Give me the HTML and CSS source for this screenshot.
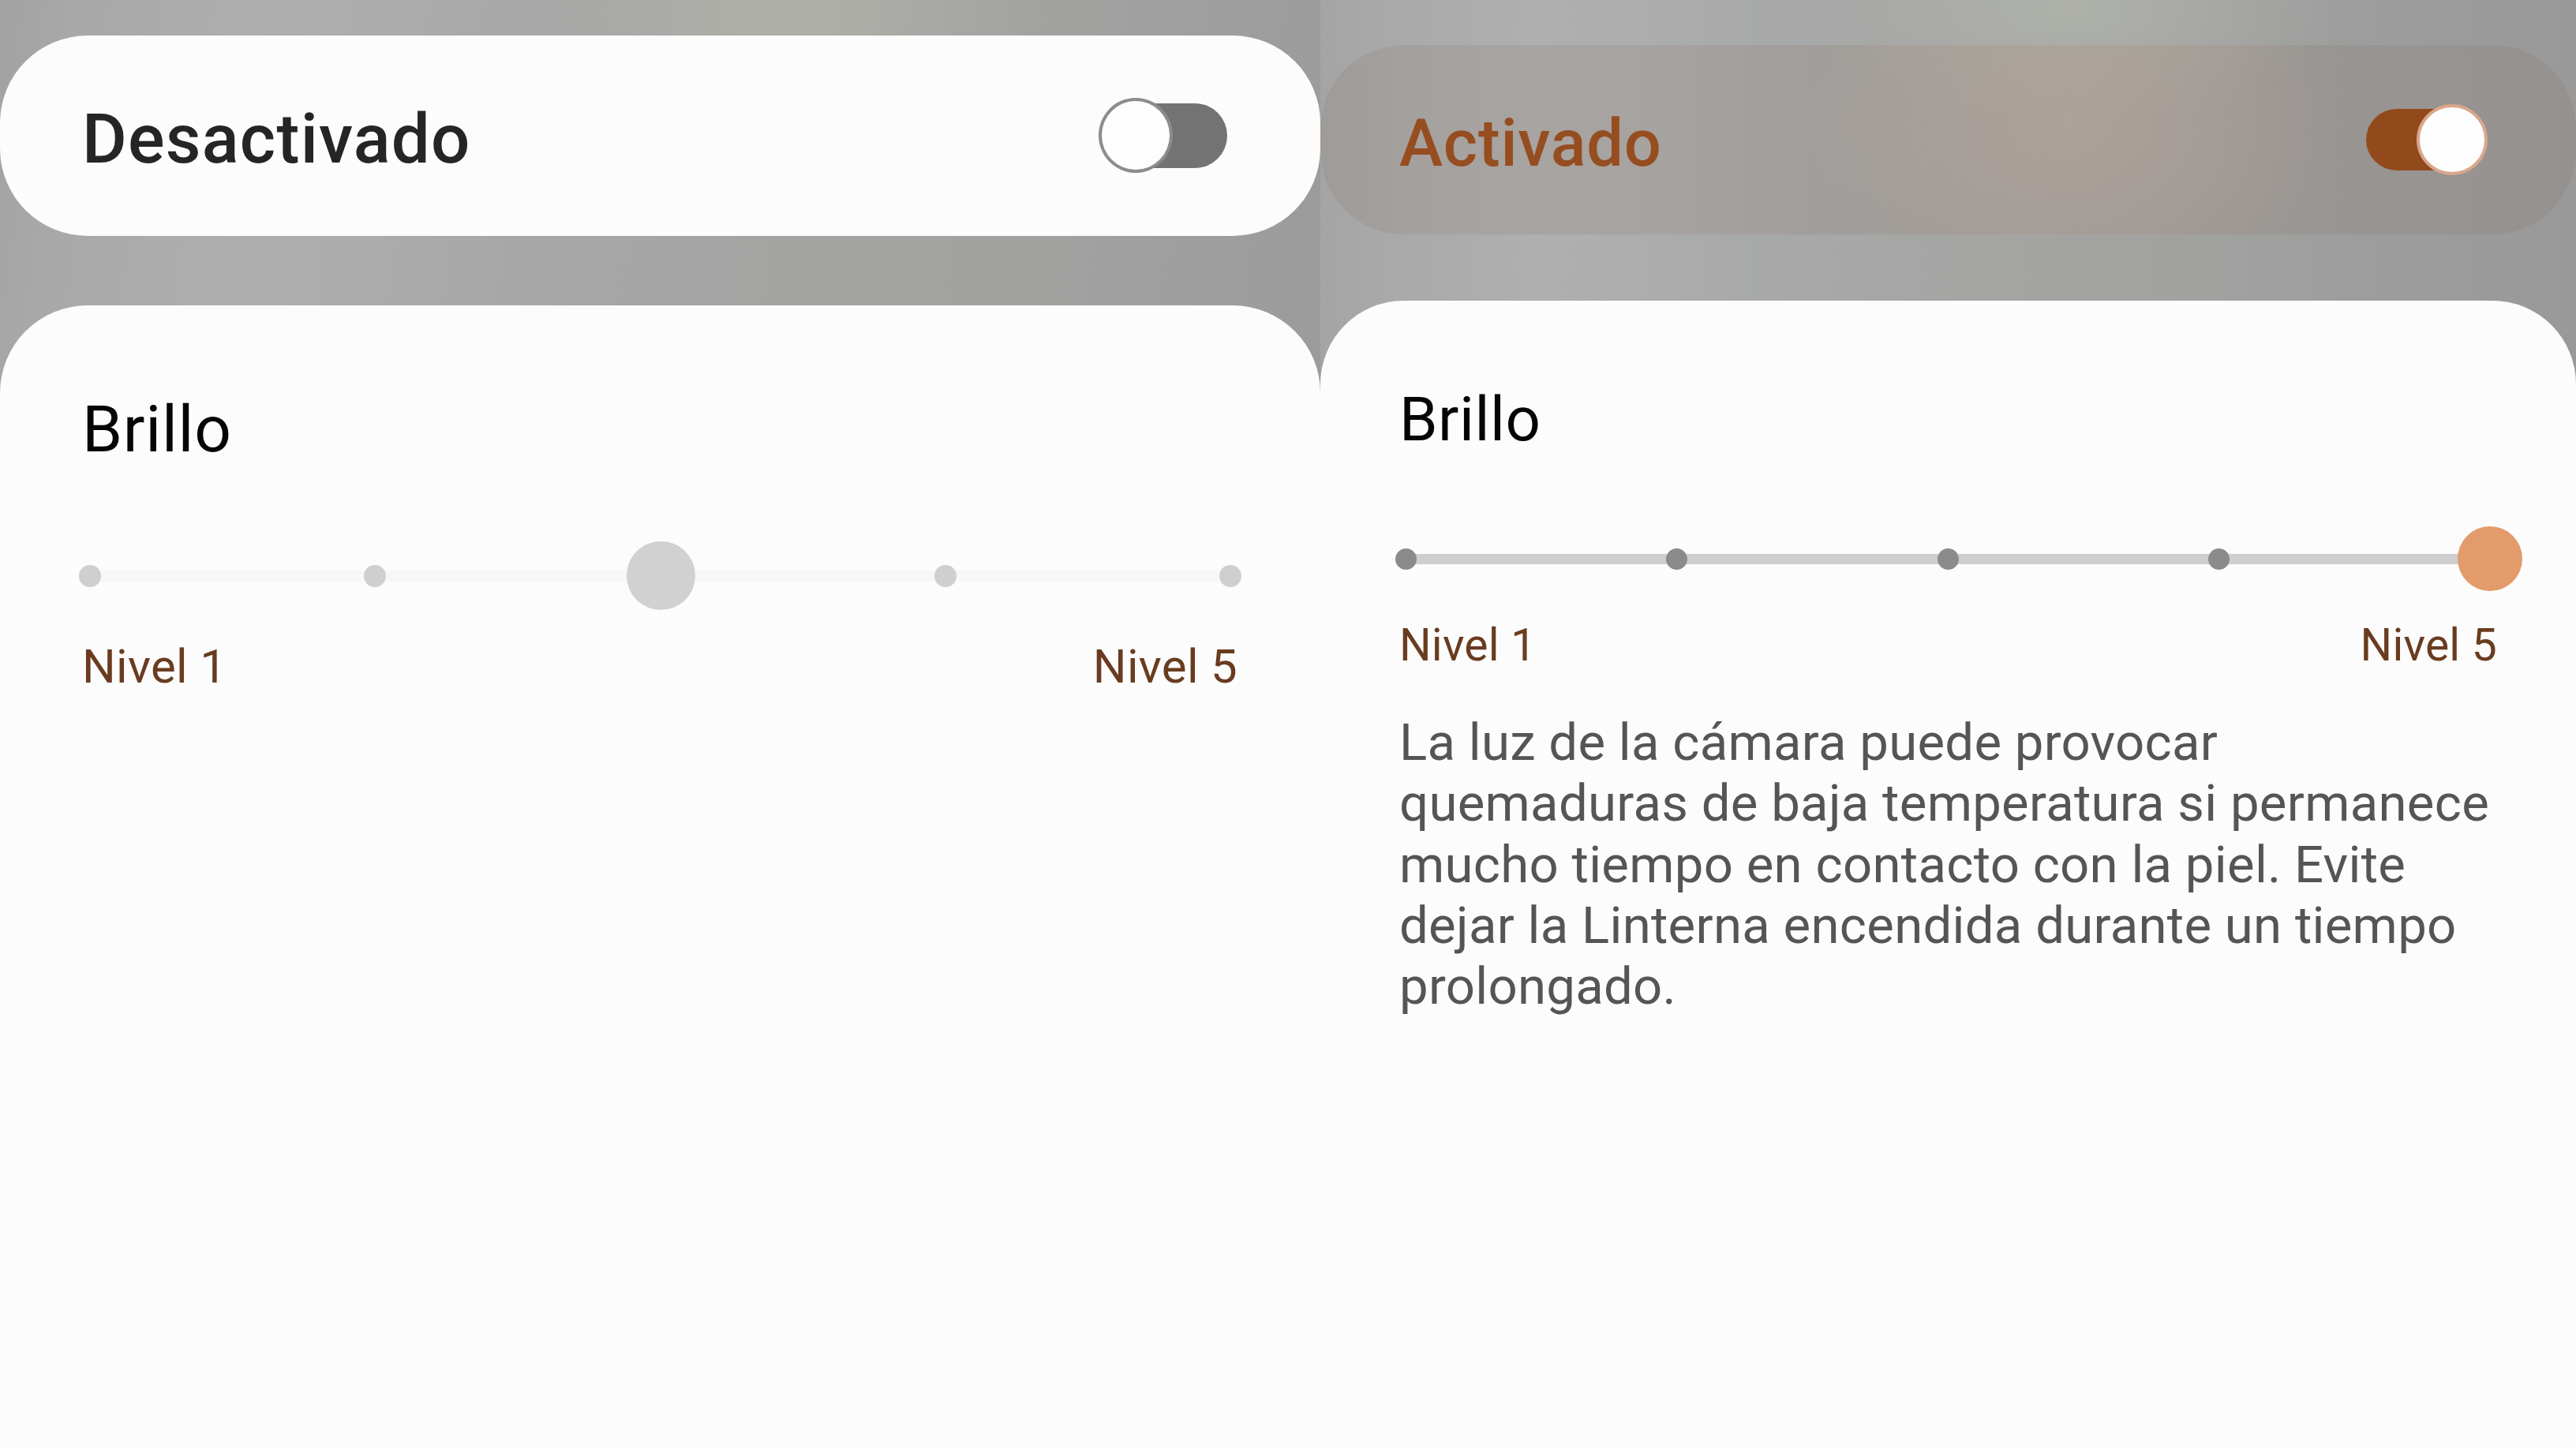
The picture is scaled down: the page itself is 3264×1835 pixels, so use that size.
FILE: index.html
```html
<!DOCTYPE html>
<html lang="es">
<head>
<meta charset="utf-8">
<title>Linterna</title>
<link rel="stylesheet" href="styles.css">
</head>
<body>
<main class="screen">
  <section class="pane pane-off">
    <header class="card">
      <h1 class="state">Desactivado</h1>
      <div class="switch" role="switch" aria-checked="false"><span class="knob"></span></div>
    </header>
    <div class="panel">
      <h2 class="heading">Brillo</h2>
      <div class="slider">
        <span class="dot"></span><span class="dot"></span><span class="thumb"></span><span class="dot"></span><span class="dot"></span>
      </div>
      <div class="labels"><span>Nivel 1</span><span>Nivel 5</span></div>
    </div>
  </section>
  <section class="pane pane-on">
    <header class="card">
      <h1 class="state">Activado</h1>
      <div class="switch" role="switch" aria-checked="true"><span class="knob"></span></div>
    </header>
    <div class="panel">
      <h2 class="heading">Brillo</h2>
      <div class="slider">
        <span class="dot"></span><span class="dot"></span><span class="dot"></span><span class="dot"></span><span class="thumb"></span>
      </div>
      <div class="labels"><span>Nivel 1</span><span>Nivel 5</span></div>
      <p class="warning">La luz de la cámara puede provocar<br>quemaduras de baja temperatura si permanece<br>mucho tiempo en contacto con la piel. Evite<br>dejar la Linterna encendida durante un tiempo<br>prolongado.</p>
    </div>
  </section>
</main>
</body>
</html>
```
FILE: styles.css
```css
* { box-sizing: border-box; margin: 0; }

body {
  width: 3264px;
  height: 1835px;
  overflow: hidden;
  background: #fcfcfc;
  font-family: Roboto, "Liberation Sans", sans-serif;
}

.screen { display: flex; height: 1835px; }

.pane { display: flex; flex-direction: column; }

.pane-off {
  width: 1673px;
  padding-top: 45px;
  gap: 88px;
  background:
    radial-gradient(ellipse 340px 240px at 1000px 20px, rgba(180, 183, 171, .65), transparent),
    linear-gradient(98deg, #a2a2a2 0, #a8a8a8 5%, #aeaeae 17%, #acacac 26%, #a7a7a7 36%, #a4a4a3 52%, #a1a1a0 72%, #9d9d9d 84%, #999 100%);
}

.pane-on {
  width: 1591px;
  padding-top: 56.5px;
  gap: 84.5px;
  background: linear-gradient(90deg, #a4a4a4 0, #a9a9a9 80px, #afafaf 270px, #adadad 400px, #a8a9a9 550px, #a5a5a4 800px, #a1a1a0 1140px, #9d9d9d 1330px, #999 1591px);
}

.pane-on {
  background:
    radial-gradient(ellipse 340px 150px at 950px 10px, rgba(180, 184, 174, .65), transparent),
    linear-gradient(90deg, #a4a4a4 0, #a9a9a9 80px, #afafaf 270px, #adadad 400px, #a8a9a9 550px, #a5a5a4 800px, #a1a1a0 1140px, #9d9d9d 1330px, #999 1591px);
}

.card { display: flex; justify-content: space-between; align-items: center; }

.pane-off .card {
  height: 253.5px;
  padding: 0 118px 0 104px;
  border-radius: 111px;
  background: #fcfcfc;
}

.pane-on .card {
  height: 240px;
  padding: 0 118px 0 100px;
  border-radius: 106px;
  background:
    radial-gradient(ellipse 330px 230px at 950px 100px, rgba(188, 168, 158, .5), transparent),
    rgba(125, 90, 65, .12);
}

.state { font-weight: 500; white-space: nowrap; }
.pane-off .state { padding-top: 8px; font-size: 87px; letter-spacing: 1.2px; color: #252525; }
.pane-on .state { padding-top: 9px; font-size: 83px; letter-spacing: .8px; color: #964d20; }

.switch { display: flex; align-items: center; }
.knob { border-radius: 50%; background: #fdfdfd; flex: none; }

.pane-off .switch { width: 155px; height: 82px; border-radius: 41px; background: #737373; }
.pane-off .knob { width: 94px; height: 95px; margin-left: -8px; border: 4px solid #8c8c8c; }

.pane-on .switch { width: 148px; height: 78px; border-radius: 39px; background: #924a1c; justify-content: flex-end; }
.pane-on .knob { width: 90px; height: 90px; margin-right: -6px; border: 4px solid #d9a78b; }

.panel { flex: 1; background: #fcfcfc; }
.pane-off .panel { padding: 109.5px 100px 0; border-radius: 111px 111px 0 0; }
.pane-on .panel { padding: 104.5px 96px 0 95px; border-radius: 106px 106px 0 0; }

.heading { font-weight: 400; color: #050505; }
.pane-off .heading { padding-left: 4px; font-size: 82px; line-height: 96px; letter-spacing: .7px; }
.pane-on .heading { padding-left: 5px; font-size: 78px; line-height: 92px; letter-spacing: .5px; }

.slider { display: flex; justify-content: space-between; align-items: center; }
.dot, .thumb { flex: none; border-radius: 50%; }

.pane-off .slider {
  height: 87px;
  margin-top: 94px;
  background: linear-gradient(#f7f7f7, #f7f7f7) center / calc(100% - 28px) 14px no-repeat;
}
.pane-off .dot { width: 28px; height: 28px; background: #cfcfcf; }
.pane-off .thumb { width: 87px; height: 87px; margin: 0 -30.5px 0 -28.5px; background: #d1d1d1; }

.pane-on .slider {
  height: 82px;
  margin-top: 89.5px;
  background: linear-gradient(#cecece, #cecece) center / calc(100% - 27px) 13px no-repeat;
}
.pane-on .dot { width: 27px; height: 27px; background: #8b8b8b; }
.pane-on .thumb { width: 82px; height: 82px; margin: 0 -27.5px; background: #e39b6c; }

.labels { display: flex; justify-content: space-between; color: #693c20; }
.pane-off .labels { margin-top: 37px; padding: 0 5px 0 4px; font-size: 60px; line-height: 70px; letter-spacing: .3px; }
.pane-on .labels { margin-top: 35.5px; padding: 0 4px 0 5px; font-size: 57px; line-height: 66px; letter-spacing: .2px; }

.warning { margin-top: 51.5px; padding-left: 5px; font-size: 65.3px; line-height: 77.3px; letter-spacing: .28px; color: #555; white-space: nowrap; }
```
